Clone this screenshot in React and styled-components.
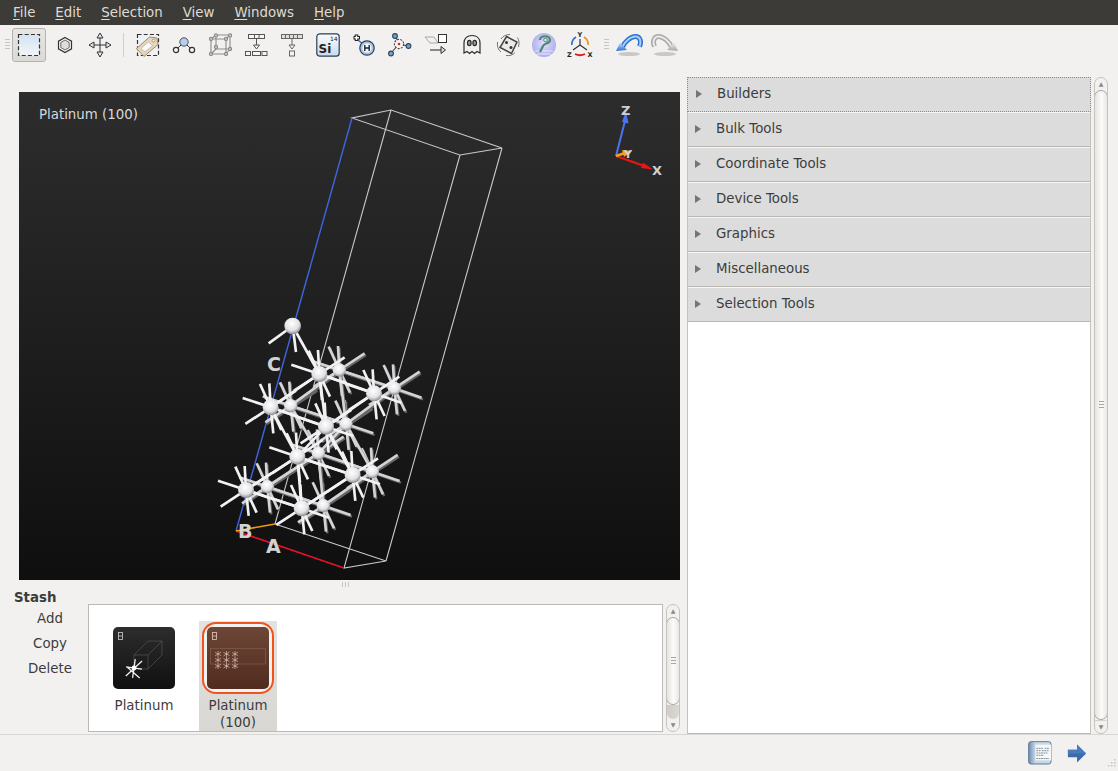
import React from 'react';
import styled, { createGlobalStyle } from 'styled-components';

const GlobalStyle = createGlobalStyle`
  html, body {
    margin: 0;
    padding: 0;
    background: #f2f1f0;
    font-family: "DejaVu Sans", sans-serif;
    font-size: 13.35px;
    color: #3c3c3c;
    overflow: hidden;
  }
`;

const Window = styled.div`
  width: 1118px;
  height: 771px;
  display: flex;
  flex-direction: column;
  overflow: hidden;
`;

const MenuBar = styled.div`
  height: 25px;
  flex: none;
  display: flex;
  align-items: center;
  padding-left: 13px;
  gap: 20px;
  background: #3c3b37;
  color: #dfdbd2;
`;

const MenuItem = styled.span`
  line-height: 25px;
  & u {
    text-underline-offset: 2px;
  }
`;

const ToolBar = styled.div`
  height: 45px;
  flex: none;
  display: flex;
  align-items: center;
  padding: 0 0 5px 3px;
  box-sizing: border-box;
`;

const Grip = styled.div`
  width: 9px;
  height: 12px;
  flex: none;
  margin: ${(p) => p.$margin || '0'};
  background: repeating-linear-gradient(to bottom, #c9c6c1 0 1px, transparent 1px 3px);
  background-size: 5px 100%;
  background-repeat: no-repeat;
  background-position: center;
`;

const ToolButton = styled.div`
  width: ${(p) => p.$w || 36}px;
  height: 34px;
  flex: none;
  display: flex;
  align-items: center;
  justify-content: center;
  box-sizing: border-box;
  border-radius: 3px;
  ${(p) => p.$active && `
    border: 1px solid #b5b2ad;
    background: linear-gradient(#e8e6e3, #dcdad6);
  `}
`;

const ToolSep = styled.div`
  width: 1px;
  height: 24px;
  flex: none;
  margin: 0 6px;
  background: #d3d0cb;
`;

const Main = styled.div`
  flex: 1;
  min-height: 0;
  display: flex;
`;

const LeftColumn = styled.div`
  width: 687px;
  flex: none;
  display: flex;
  flex-direction: column;
`;

const Viewer = styled.div`
  position: relative;
  width: 661px;
  height: 488px;
  flex: none;
  margin: 22px 0 0 19px;
  background: linear-gradient(#2d2d2d, #0f0f0f);
`;

const ViewerLabel = styled.div`
  position: absolute;
  left: 20px;
  top: 15px;
  color: #d8d8d8;
`;

const ViewerDrawing = styled.svg`
  display: block;
  width: 100%;
  height: 100%;
`;

const SplitHandle = styled.div`
  width: 7px;
  height: 5px;
  margin: 2px 0 0 342px;
  background: repeating-linear-gradient(to right, #c9c6c1 0 1px, transparent 1px 3px);
`;

const StashArea = styled.div`
  flex: 1;
  min-height: 0;
  display: flex;
  padding: 17px 7px 2px 0;
`;

const StashSide = styled.div`
  width: 88px;
  flex: none;
  margin-top: -14px;
`;

const StashTitle = styled.div`
  font-weight: bold;
  padding-left: 14px;
  line-height: 16px;
`;

const StashAction = styled.div`
  width: 100px;
  text-align: center;
  height: 25px;
  line-height: 25px;
`;

const StashList = styled.div`
  flex: 1;
  display: flex;
  align-items: flex-start;
  gap: 32px;
  box-sizing: border-box;
  border: 1px solid #bdbab5;
  background: #fff;
  padding: 22px 0 0 24px;
  overflow: hidden;
`;

const StashItem = styled.div`
  width: 62px;
  display: flex;
  flex-direction: column;
  align-items: center;
  position: relative;
  z-index: 0;
  ${(p) => p.$selected && `
    &::before {
      content: "";
      position: absolute;
      z-index: -1;
      left: -8px;
      right: -8px;
      top: -6px;
      height: 110px;
      background: linear-gradient(#e4e2df, #d9d7d3);
    }
  `}
`;

const Thumb = styled.div`
  width: 62px;
  height: 62px;
  flex: none;
  border-radius: 5px;
  overflow: hidden;
  background: ${(p) => (p.$brown ? 'linear-gradient(#6d4636, #502c1f)' : 'linear-gradient(#2d2d2d, #101010)')};
`;

const ThumbRing = styled.div`
  border-radius: 9px;
  ${(p) => p.$on && 'box-shadow: 0 0 0 3px #f2f1f0, 0 0 0 5px #f0541e;'}
`;

const ThumbDrawing = styled.svg`
  display: block;
  width: 62px;
  height: 62px;
`;

const ItemLabel = styled.div`
  margin-top: 8px;
  width: 78px;
  text-align: center;
  line-height: 17px;
`;

const ScrollBar = styled.div`
  width: 14px;
  flex: none;
  display: flex;
  flex-direction: column;
  box-sizing: border-box;
  margin-left: ${(p) => p.$ml || 3}px;
  border: 1px solid #c6c3be;
  border-radius: 7px;
  background: #f2f1f0;
  overflow: hidden;
`;

const ScrollArrow = styled.div`
  height: 12px;
  flex: none;
  display: flex;
  align-items: center;
  justify-content: center;
  color: #8a8884;
  font-size: 6px;
  line-height: 12px;
`;

const ScrollThumb = styled.div`
  height: ${(p) => p.$h}px;
  flex: none;
  display: flex;
  align-items: center;
  justify-content: center;
  box-sizing: border-box;
  margin: 0 -1px;
  border: 1px solid #a9a6a1;
  border-radius: 7px;
  background: linear-gradient(to right, #e6e4e1, #fbfbfa 55%, #e9e7e4);
`;

const ThumbGrip = styled.div`
  width: 5px;
  height: 8px;
  background: repeating-linear-gradient(to bottom, #a9a6a1 0 1px, transparent 1px 3px);
`;

const ScrollTrack = styled.div`
  flex: 1;
  background: linear-gradient(to right, #cfccc8, #dad8d4);
  border-radius: 0 0 7px 7px;
`;

const RightColumn = styled.div`
  flex: 1;
  min-width: 0;
  display: flex;
  padding: 7px 10px 0 0;
`;

const ToolPanel = styled.div`
  width: 404px;
  flex: none;
  box-sizing: border-box;
  border-left: 1px solid #c6c3be;
  border-right: 1px solid #c6c3be;
  border-bottom: 1px solid #bdbab5;
  background: #fff;
`;

const Section = styled.div`
  height: 35px;
  box-sizing: border-box;
  display: flex;
  align-items: center;
  padding-bottom: 2px;
  background: #dcdcdc;
  border-bottom: 1px solid #b9b6b1;
  border-top: 1px solid #f6f6f6;
  ${(p) => p.$focused && `
    border: 1px dotted #8c8a86;
    margin: 0 -1px;
    padding-left: 1px;
  `}
`;

const SectionArrow = styled.span`
  width: 0;
  height: 0;
  margin: 0 15px 0 7px;
  border-left: 6px solid #77756f;
  border-top: 4px solid transparent;
  border-bottom: 4px solid transparent;
`;

const SectionName = styled.span`
  margin-left: 0;
`;

const StatusBar = styled.div`
  height: 37px;
  flex: none;
  display: flex;
  align-items: center;
  justify-content: flex-end;
  gap: 15px;
  box-sizing: border-box;
  padding: 0 31px 0 0;
  border-top: 1px solid #d8d6d2;
  position: relative;
`;

const ResizeGrip = styled.svg`
  position: absolute;
  right: 1px;
  bottom: 1px;
`;

const svgText = { fontFamily: '"DejaVu Sans", sans-serif', fontWeight: 'bold' };

const SelectIcon = () => (
  <svg width="26" height="26" viewBox="0 0 26 26">
    <defs>
      <linearGradient id="sel" x1="0" y1="0" x2="0" y2="1">
        <stop offset="0" stopColor="#d3e2f3" />
        <stop offset="1" stopColor="#f2f5f8" />
      </linearGradient>
    </defs>
    <rect x="2.5" y="2.5" width="21" height="21" fill="url(#sel)" stroke="#333" strokeWidth="1.2" strokeDasharray="4 2.2" />
  </svg>
);

const HexIcon = () => (
  <svg width="18" height="18" viewBox="0 0 18 18" fill="none" stroke="#333">
    <path d="M9 1.5 15.5 5.2V12.8L9 16.5 2.5 12.8V5.2Z" fill="#f4f4f4" strokeWidth="1.2" />
    <path d="M9 4 13.2 6.5V11.5L9 14 4.8 11.5V6.5Z" fill="#ddd" strokeWidth=".7" />
  </svg>
);

const MoveIcon = () => (
  <svg width="24" height="26" viewBox="0 0 24 26" fill="#e3e8f0" stroke="#333" strokeWidth="1">
    <path d="M12 5V21M3 13H21" />
    <path d="M12 1 15 6H9ZM12 25 15 20H9ZM1 13 6 10V16ZM23 13 18 10V16Z" />
  </svg>
);

const TagIcon = () => (
  <svg width="26" height="26" viewBox="0 0 26 26">
    <rect x="2.5" y="2.5" width="21" height="21" fill="#eef1f5" stroke="#333" strokeWidth="1.2" strokeDasharray="4 2.2" />
    <path d="M1.5 16.5 14.500 5l7.500 1 1 6.500L9 24.500Z" fill="#e6d6bb" stroke="#a08a68" />
    <path d="M6 16.500 13.500 10l4 3.500L10 20Z" fill="#fbfbfb" stroke="#a5a5a5" strokeWidth=".6" />
    <circle cx="18.500" cy="8.500" r="1.400" fill="#fff" stroke="#8a765a" strokeWidth=".7" />
  </svg>
);

const BondIcon = () => (
  <svg width="24" height="20" viewBox="0 0 24 20" fill="#f3f3f3" stroke="#333">
    <path d="M5 14 12 7 19 14" fill="none" />
    <circle cx="12" cy="7" r="4.2" fill="#b9cde6" stroke="#44536b" />
    <circle cx="4" cy="15" r="2.6" strokeWidth="1.2" />
    <circle cx="20" cy="15" r="2.6" strokeWidth="1.2" />
  </svg>
);

const CubeIcon = () => (
  <svg width="24" height="24" viewBox="0 0 24 24" fill="none" stroke="#8b8b88" strokeWidth="1.1">
    <path d="M3 6H18V21H3ZM8 2H22V16H8ZM3 6 8 2M18 6 22 2M18 21 22 16M3 21 8 16" />
    <g fill="#c8c8c5">
      <circle cx="3" cy="6" r="1.6" /><circle cx="18" cy="6" r="1.6" /><circle cx="8" cy="2.4" r="1.6" />
      <circle cx="22" cy="2.4" r="1.6" /><circle cx="3" cy="21" r="1.6" /><circle cx="18" cy="21" r="1.6" />
      <circle cx="22" cy="16" r="1.6" /><circle cx="8" cy="14" r="1.6" />
    </g>
  </svg>
);

const TreeIcon = () => (
  <svg width="24" height="24" viewBox="0 0 24 24" fill="#f5f5f5" stroke="#555" strokeWidth="1">
    <rect x="4.5" y="1.5" width="16" height="4" />
    <path d="M10.5 2V5M15 2V5" />
    <path d="M12.5 6V12" fill="none" />
    <path d="M9.5 12H15.5L12.5 16Z" />
    <rect x="1.5" y="18.5" width="5" height="4" />
    <rect x="8.5" y="18.5" width="8" height="4" />
    <rect x="18" y="18.5" width="5" height="4" />
  </svg>
);

const ReduceIcon = () => (
  <svg width="24" height="24" viewBox="0 0 24 24" fill="#ddd" stroke="#666" strokeWidth="1">
    <rect x="1.5" y="1.5" width="21" height="4" />
    <path d="M5.5 2V5M9.5 2V5M13.5 2V5M17.5 2V5" />
    <path d="M12 6V12" fill="none" />
    <path d="M9 12H15L12 16Z" fill="#f5f5f5" />
    <rect x="9.5" y="18" width="5" height="5" fill="#f5f5f5" />
  </svg>
);

const ElementIcon = () => (
  <svg width="24" height="24" viewBox="0 0 24 24">
    <defs>
      <linearGradient id="si" x1="0" y1="0" x2="0" y2="1">
        <stop offset="0" stopColor="#fbfcfe" />
        <stop offset="1" stopColor="#c7dbef" />
      </linearGradient>
    </defs>
    <rect x=".8" y=".8" width="22.4" height="22.4" rx="3" fill="url(#si)" stroke="#2c3e50" strokeWidth="1.2" />
    <text x="2.500" y="20" fontSize="12" fill="#222" style={svgText}>Si</text>
    <text x="14" y="7.500" fontSize="6" fill="#222" fontFamily="DejaVu Sans">14</text>
  </svg>
);

const HydrogenIcon = () => (
  <svg width="24" height="24" viewBox="0 0 24 24">
    <path d="M6 7 12 12" stroke="#4d6f94" strokeWidth="1.6" />
    <path d="M4.5 1.5V8M1.5 4.7H8" stroke="#222" strokeWidth="3.6" />
    <path d="M4.5 2.5V7M2.5 4.7H7" stroke="#fff" strokeWidth="1.4" />
    <circle cx="15" cy="15" r="7.2" fill="#a9c6e6" stroke="#28415e" strokeWidth="1.2" />
    <circle cx="15" cy="15" r="4.6" fill="#f4f8fc" />
    <path d="M12.8 12V18M17.2 12V18M12.8 15H17.2" stroke="#222" strokeWidth="1.4" fill="none" />
  </svg>
);

const NetworkIcon = () => (
  <svg width="24" height="24" viewBox="0 0 24 24" stroke="#444" strokeWidth="1.1">
    <path d="M11 11 7 2M11 11 20 13M11 11 3 20" />
    <circle cx="11" cy="11" r="4.6" fill="#f5f5f5" strokeDasharray="2 1.2" />
    <circle cx="11" cy="11" r="1.3" fill="#d22" stroke="none" />
    <g fill="#7d9dbf" stroke="#2d4763">
      <circle cx="7" cy="3" r="2.4" /><circle cx="20.5" cy="13" r="2.4" /><circle cx="3" cy="20.5" r="2.4" />
    </g>
  </svg>
);

const ConvertIcon = () => (
  <svg width="24" height="24" viewBox="0 0 24 24" stroke="#333" fill="#fff">
    <path d="M1 4H10L14 10H6Z" strokeWidth=".7" stroke="#888" fill="#f1f1f1" />
    <rect x="14.5" y="1.5" width="8" height="8" strokeWidth="1" />
    <path d="M6 17H17" fill="none" strokeWidth="1.1" />
    <path d="M17 13.5 21.5 17 17 20.5Z" strokeWidth="1" fill="#ddd" />
  </svg>
);

const GhostIcon = () => (
  <svg width="20" height="22" viewBox="0 0 20 22" stroke="#2c2c2c" strokeWidth="1.2" fill="#f0f0ee">
    <path d="M2 19V9C2 4 5.5 1.5 10 1.5S18 4 18 9V19L15 17.5 12.5 19.5 10 17.5 7.5 19.5 5 17.5Z" />
    <ellipse cx="7.3" cy="9" rx="1.8" ry="2.6" fill="#999" />
    <ellipse cx="12.7" cy="9" rx="1.8" ry="2.6" fill="#999" />
  </svg>
);

const DiceIcon = () => (
  <svg width="24" height="24" viewBox="0 0 24 24" fill="none" stroke="#444">
    <path d="M10.500 3.500 21 9 15.500 20.500 4 14.500Z" fill="#e9e9e7" strokeWidth="1.500" />
    <circle cx="10.500" cy="9.500" r="1.500" fill="#333" stroke="none" />
    <circle cx="15" cy="14.500" r="1.500" fill="#333" stroke="none" />
    <path d="M5 6C7 3 10 1.500 14 1.500M19 19.500C17 22 14 23 10 22.500M1.500 9C1 13 2 17 5 19M21.500 4.500C23 7 23.500 10 22.500 14" stroke="#777" />
  </svg>
);

const HelpOrbIcon = () => (
  <svg width="26" height="26" viewBox="0 0 26 26">
    <defs>
      <radialGradient id="orb" cx=".5" cy=".45" r=".6">
        <stop offset="0" stopColor="#e0dffa" />
        <stop offset="1" stopColor="#a7a8ec" />
      </radialGradient>
    </defs>
    <circle cx="13" cy="13" r="12" fill="url(#orb)" />
    <path d="M4 19H22M6 22H20" stroke="#fff" strokeWidth="1" opacity=".7" />
    <path d="M9 8C9 3 19 3 19 8 19 12 13 11 12 14L9 20" fill="none" stroke="#4f8a70" strokeWidth="2.2" />
    <circle cx="14.5" cy="8" r="1.8" fill="#e8e8ff" stroke="#4f8a70" />
  </svg>
);

const AxesIcon = () => (
  <svg width="26" height="26" viewBox="0 0 26 26" fill="none">
    <path d="M13 13V7M13 13 6 18M13 13 20 18" stroke="#333" strokeWidth="1.2" />
    <path d="M9 5C6 7 4.500 10 5 13" stroke="#2f6fd6" strokeWidth="1.6" />
    <path d="M17 5C20 7 21.500 10 21 13" stroke="#e8961e" strokeWidth="1.6" />
    <path d="M8 22C11 23.500 15 23.500 18 22" stroke="#d81f1f" strokeWidth="1.8" />
    <text x="10.500" y="5" fontSize="6.500" fill="#222" style={svgText}>Y</text>
    <text x="0" y="25" fontSize="6.500" fill="#222" style={svgText}>Z</text>
    <text x="20.500" y="25" fontSize="6.500" fill="#222" style={svgText}>X</text>
  </svg>
);

const CurveArrowIcon = ({ grey }) => (
  <svg width="28" height="24" viewBox="0 0 28 24">
    <defs>
      <linearGradient id={grey ? 'cvg' : 'cvb'} x1="0" y1="0" x2="0" y2="1">
        <stop offset="0" stopColor={grey ? '#ededeb' : '#cfe2f7'} />
        <stop offset="1" stopColor={grey ? '#a9a9a7' : '#2a72d4'} />
      </linearGradient>
    </defs>
    <ellipse cx="14" cy="21" rx="11" ry="2" fill="#8b8b88" opacity=".4" />
    <g transform={grey ? 'matrix(-1 0 0 1 28 0)' : undefined} fill="none">
      <path
        d="M7 15C9 9 16 3 21 3.500 25.500 4 26.500 9 24.500 13.500"
        stroke={grey ? '#a9a9a7' : '#2a72d4'}
        strokeWidth="5"
      />
      <path
        d="M7 15C9 9 16 3 21 3.500 25.500 4 26.500 9 24.500 13.500"
        stroke={grey ? '#e8e8e6' : '#a9cdf3'}
        strokeWidth="2"
      />
      <path d="M1 18 5 9.500 12 17Z" fill={grey ? 'url(#cvg)' : 'url(#cvb)'} />
    </g>
  </svg>
);

const NotesIcon = () => (
  <svg width="24" height="24" viewBox="0 0 26 26">
    <defs>
      <linearGradient id="note" x1="0" y1="0" x2="1" y2="0">
        <stop offset="0" stopColor="#6c8db2" />
        <stop offset=".3" stopColor="#c8d7e7" />
      </linearGradient>
    </defs>
    <rect x=".7" y=".7" width="24.200" height="24.200" rx="2.500" fill="url(#note)" stroke="#55718f" />
    <path d="M8 4H25V21H8Z" fill="#f5f7f9" />
    <path d="M9 8H16M18 8H23M9 10.500H14M15 10.500H23M9 13H21M9 15.500H17M9 19H23" stroke="#7a8794" strokeWidth="1" strokeDasharray="2 .6" />
  </svg>
);

const NextIcon = () => (
  <svg width="20" height="21" viewBox="0 0 22 22">
    <path d="M1 7H11V1L21 11 11 21V15H1Z" fill="#3a6cac" />
    <path d="M1 7H11V1L21 11H1Z" fill="#4a7cbc" />
  </svg>
);

// atoms read off the picture, in 3x coordinates; the group below scales them down
const frontAtoms = [
  [108, 570], [275, 625], [428, 525], [262, 470],
  [182, 322], [348, 380], [492, 280], [328, 222],
];
const backAtoms = [
  [172, 560], [340, 617], [487, 515], [325, 460],
  [242, 317], [408, 372], [553, 265], [388, 210],
];
const stubs = [
  [-84, -28], [82, 28], [-4, -72], [8, 78], [-32, -70], [32, 68], [76, -50], [-76, 50],
];
const frontBonds = [
  [0, 3], [1, 2], [3, 5], [4, 7], [5, 6], [4, 3], [3, 1], [7, 5], [5, 2], [0, 1], [3, 2], [4, 5], [7, 6],
];

const Bond = ({ a, b, back }) => (
  <g>
    {back && <line x1={a[0] + 4} y1={a[1] + 5} x2={b[0] + 4} y2={b[1] + 5} stroke="#666" strokeWidth="7" />}
    <line x1={a[0]} y1={a[1]} x2={b[0]} y2={b[1]} stroke={back ? '#d4d4d7' : '#f2f2f4'} strokeWidth="8" />
  </g>
);

const Atom = ({ at, r }) => (
  <circle cx={at[0]} cy={at[1]} r={r} fill="url(#atom)" />
);

const Lattice = () => (
  <g transform="translate(191 208) scale(0.3333)">
    {backAtoms.map((a, i) => stubs.map((s, j) => (
      <Bond key={`bs${i}${j}`} a={a} b={[a[0] + s[0], a[1] + s[1]]} back />
    )))}
    {frontBonds.map(([p, q]) => (
      <Bond key={`bb${p}${q}`} a={backAtoms[p]} b={backAtoms[q]} back />
    ))}
    {backAtoms.map((a, i) => <Atom key={`b${i}`} at={a} r={20} />)}
    {frontAtoms.map((a, i) => stubs.map((s, j) => (
      <Bond key={`fs${i}${j}`} a={a} b={[a[0] + s[0], a[1] + s[1]]} />
    )))}
    {frontBonds.map(([p, q]) => (
      <Bond key={`fb${p}${q}`} a={frontAtoms[p]} b={frontAtoms[q]} />
    ))}
    <Bond a={[248, 78]} b={[328, 222]} />
    <Bond a={[248, 78]} b={[176, 130]} />
    <Bond a={[248, 78]} b={[258, 156]} />
    {frontAtoms.map((a, i) => <Atom key={`f${i}`} at={a} r={24} />)}
    <Atom at={[248, 78]} r={25} />
  </g>
);

// unit cell corners in page coordinates, shifted by the viewer's corner
const toCell = (x, y) => `${x - 19},${y - 92}`;

const CellBox = () => (
  <g fill="none" strokeWidth="1.1">
    <polyline
      stroke="#c9c9c9"
      points={[
        toCell(275, 524), toCell(386, 561), toCell(344, 568),
        toCell(460, 155), toCell(352, 118), toCell(391, 110), toCell(502, 148), toCell(460, 155),
      ].join(' ')}
    />
    <polyline stroke="#c9c9c9" points={[toCell(275, 524), toCell(391, 110)].join(' ')} />
    <polyline stroke="#c9c9c9" points={[toCell(386, 561), toCell(502, 148)].join(' ')} />
    <polyline stroke="#3f66e0" strokeWidth="1.4" points={[toCell(236, 531), toCell(352, 118)].join(' ')} />
    <polyline stroke="#e8102a" strokeWidth="1.6" points={[toCell(236, 531), toCell(344, 568)].join(' ')} />
    <polyline stroke="#ef9a12" strokeWidth="1.6" points={[toCell(236, 531), toCell(275, 524)].join(' ')} />
  </g>
);

const CellLabels = () => (
  <g fill="#d2d2d2" fontSize="19" style={svgText}>
    <text x="219" y="446">B</text>
    <text x="247" y="461">A</text>
    <text x="248" y="279">C</text>
  </g>
);

const Triad = () => (
  <g>
    <path d="M597 64 606.500 27" stroke="#4a74f0" strokeWidth="2" />
    <path d="M607 19 603 30 609.500 31.500Z" fill="#4a74f0" />
    <path d="M597 64 628 75" stroke="#ee1414" strokeWidth="2" />
    <path d="M634 77.500 624 70.500 622 76Z" fill="#ee1414" />
    <path d="M597 64 609 60" stroke="#f5a018" strokeWidth="2.500" />
    <path d="M613 59 603 58 605 65Z" fill="#f5a018" />
    <g fill="#d0d0d0" fontSize="13" style={svgText}>
      <text x="602" y="23">Z</text>
      <text x="633" y="83">X</text>
      <text x="605" y="66" fontSize="11">Y</text>
    </g>
  </g>
);

const BadgeGlyph = ({ color }) => (
  <g fill="none" stroke={color} strokeWidth=".8">
    <rect x="5.500" y="5.500" width="4" height="7" />
    <path d="M5.500 9H9.500" />
  </g>
);

const FirstThumb = () => (
  <ThumbDrawing viewBox="0 0 62 62">
    <BadgeGlyph color="#cfcfcf" />
    <g fill="none" stroke="#5a5a5a" strokeWidth=".6">
      <path d="M21 28 35 14H49V28L35 42H21Z M21 28H35V42 M35 28 49 14" />
    </g>
    <path d="M14 41 28 50M28 33 14 50M21 32V51M13 41H29" stroke="#f0f0f0" strokeWidth="1.300" transform="rotate(8 21 41)" />
    <circle cx="21" cy="41" r="2.400" fill="#fff" />
  </ThumbDrawing>
);

const SecondThumb = () => {
  const nodes = [];
  for (let i = 0; i < 3; i++) {
    for (let j = 0; j < 3; j++) nodes.push([11 + i * 8.500, 27 + j * 6]);
  }
  return (
    <ThumbDrawing viewBox="0 0 62 62">
      <BadgeGlyph color="#e6c8ba" />
      <rect x="3.500" y="21.500" width="55" height="15.500" fill="none" stroke="#8a6150" strokeWidth=".6" />
      <g stroke="#e8cfc4" strokeWidth=".6">
        {nodes.map(([x, y]) => (
          <path key={`${x}${y}`} d={`M${x - 3} ${y - 1.500}L${x + 3} ${y + 1.500}M${x} ${y - 3}V${y + 3}M${x - 3} ${y + 2}L${x + 3} ${y - 2}`} />
        ))}
      </g>
    </ThumbDrawing>
  );
};

const sections = [
  'Builders', 'Bulk Tools', 'Coordinate Tools', 'Device Tools',
  'Graphics', 'Miscellaneous', 'Selection Tools',
];

const menus = [
  ['F', 'ile'], ['E', 'dit'], ['S', 'election'], ['V', 'iew'], ['W', 'indows'], ['H', 'elp'],
];

const mainTools = [
  TagIcon, BondIcon, CubeIcon, TreeIcon, ReduceIcon, ElementIcon, HydrogenIcon,
  NetworkIcon, ConvertIcon, GhostIcon, DiceIcon, HelpOrbIcon, AxesIcon,
];

const App = () => (
  <Window>
    <GlobalStyle />
    <MenuBar>
      {menus.map(([key, rest]) => (
        <MenuItem key={key}><u>{key}</u>{rest}</MenuItem>
      ))}
    </MenuBar>
    <ToolBar>
      <Grip />
      <ToolButton $w={34} $active><SelectIcon /></ToolButton>
      <ToolButton $w={37}><HexIcon /></ToolButton>
      <ToolButton $w={34}><MoveIcon /></ToolButton>
      <ToolSep />
      {mainTools.map((Icon, i) => (
        <ToolButton key={i}><Icon /></ToolButton>
      ))}
      <Grip $margin="0 0 0 4px" />
      <ToolButton><CurveArrowIcon /></ToolButton>
      <ToolButton><CurveArrowIcon grey /></ToolButton>
    </ToolBar>
    <Main>
      <LeftColumn>
        <Viewer>
          <ViewerDrawing viewBox="0 0 661 488">
            <defs>
              <radialGradient id="atom" cx=".45" cy=".35" r=".7">
                <stop offset="0" stopColor="#ffffff" />
                <stop offset=".6" stopColor="#e2e2e6" />
                <stop offset="1" stopColor="#77777c" />
              </radialGradient>
            </defs>
            <CellBox />
            <Lattice />
            <CellLabels />
            <Triad />
          </ViewerDrawing>
          <ViewerLabel>Platinum (100)</ViewerLabel>
        </Viewer>
        <SplitHandle />
        <StashArea>
          <StashSide>
            <StashTitle>Stash</StashTitle>
            <StashAction>Add</StashAction>
            <StashAction>Copy</StashAction>
            <StashAction>Delete</StashAction>
          </StashSide>
          <StashList>
            <StashItem>
              <Thumb><FirstThumb /></Thumb>
              <ItemLabel>Platinum</ItemLabel>
            </StashItem>
            <StashItem $selected>
              <ThumbRing $on>
                <Thumb $brown><SecondThumb /></Thumb>
              </ThumbRing>
              <ItemLabel>Platinum (100)</ItemLabel>
            </StashItem>
          </StashList>
          <ScrollBar>
            <ScrollArrow>▲</ScrollArrow>
            <ScrollThumb $h={88}><ThumbGrip /></ScrollThumb>
            <ScrollTrack />
            <ScrollArrow>▼</ScrollArrow>
          </ScrollBar>
        </StashArea>
      </LeftColumn>
      <RightColumn>
        <ToolPanel>
          {sections.map((name, i) => (
            <Section key={name} $focused={i === 0}>
              <SectionArrow />
              <SectionName>{name}</SectionName>
            </Section>
          ))}
        </ToolPanel>
        <ScrollBar>
          <ScrollArrow>▲</ScrollArrow>
          <ScrollThumb $h={630}><ThumbGrip /></ScrollThumb>
          <ScrollTrack />
          <ScrollArrow>▼</ScrollArrow>
        </ScrollBar>
      </RightColumn>
    </Main>
    <StatusBar>
      <NotesIcon />
      <NextIcon />
      <ResizeGrip width="12" height="12" viewBox="0 0 12 12" fill="#c6c3be">
        <rect x="9" y="1" width="1.500" height="1.500" />
        <rect x="6" y="4" width="1.500" height="1.500" /><rect x="9" y="4" width="1.500" height="1.500" />
        <rect x="3" y="7" width="1.500" height="1.500" /><rect x="6" y="7" width="1.500" height="1.500" /><rect x="9" y="7" width="1.500" height="1.500" />
      </ResizeGrip>
    </StatusBar>
  </Window>
);

export default App;
